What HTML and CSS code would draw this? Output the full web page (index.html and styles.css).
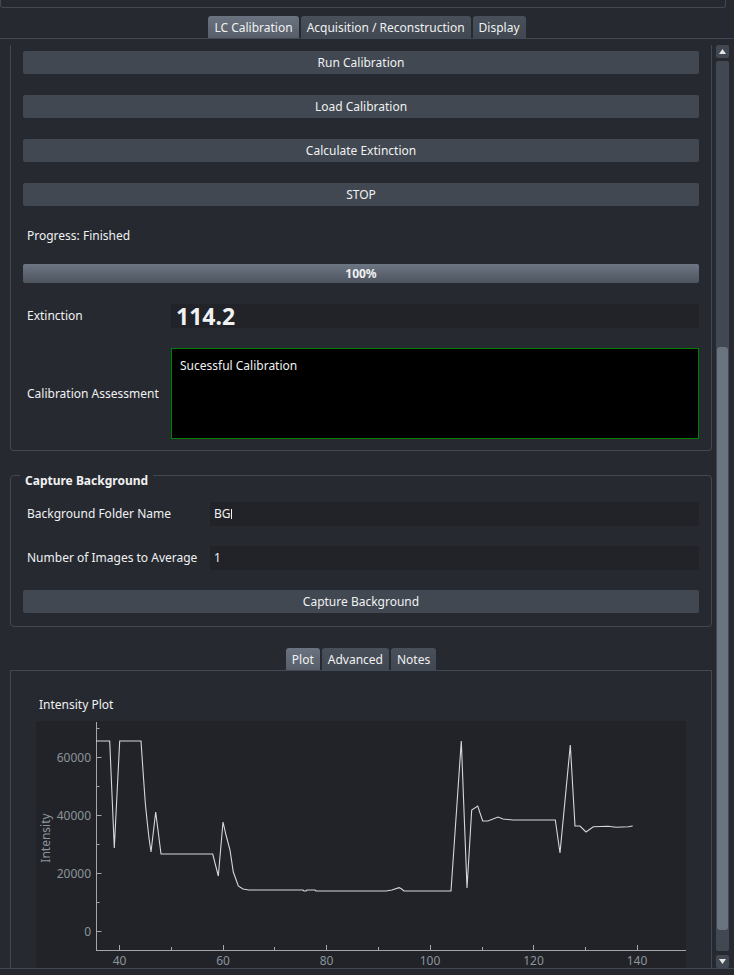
FILE: index.html
```html
<!DOCTYPE html>
<html>
<head>
<meta charset="utf-8">
<title>LC Calibration</title>
<link rel="stylesheet" href="styles.css">
</head>
<body>
<div class="app">
  <div class="top-panel"></div>
  <div class="tabbar main-tabs">
    <div class="tab selected">LC Calibration</div>
    <div class="tab">Acquisition / Reconstruction</div>
    <div class="tab">Display</div>
  </div>
  <div class="pane">
    <div class="scroll">
      <div class="viewport">
        <div class="group group-calib">
          <button class="btn">Run Calibration</button>
          <button class="btn">Load Calibration</button>
          <button class="btn">Calculate Extinction</button>
          <button class="btn">STOP</button>
          <div class="status">Progress: Finished</div>
          <div class="progress">100%</div>
          <div class="row row-ext">
            <div class="label label-calib">Extinction</div>
            <div class="field ext">114.2</div>
          </div>
          <div class="row row-assess">
            <div class="label label-calib">Calibration Assessment</div>
            <div class="assess">Sucessful Calibration</div>
          </div>
        </div>
        <fieldset class="group group-bg">
          <legend class="group-title">Capture Background</legend>
          <div class="row row-first">
            <div class="label label-bg">Background Folder Name</div>
            <div class="field input">BG<span class="caret"></span></div>
          </div>
          <div class="row row-next">
            <div class="label label-bg">Number of Images to Average</div>
            <div class="field input">1</div>
          </div>
          <button class="btn btn-capture">Capture Background</button>
        </fieldset>
        <div class="subtabs">
          <div class="tabbar sub-tabs">
            <div class="tab selected">Plot</div>
            <div class="tab">Advanced</div>
            <div class="tab">Notes</div>
          </div>
          <div class="subpane">
            <div class="plot-title">Intensity Plot</div>
            <div class="plot">
              <svg class="chart" width="650" height="260" viewBox="36 721 650 260" xmlns="http://www.w3.org/2000/svg">
                <g class="axis">
                  <line x1="96.5" y1="722" x2="96.5" y2="951"/>
                  <line x1="96" y1="950.5" x2="686" y2="950.5"/>
                  <line x1="96.5" y1="931.5" x2="101.5" y2="931.5"/>
                  <line x1="96.5" y1="873.5" x2="101.5" y2="873.5"/>
                  <line x1="96.5" y1="815.5" x2="101.5" y2="815.5"/>
                  <line x1="96.5" y1="757.5" x2="101.5" y2="757.5"/>
                  <line x1="96.5" y1="902.5" x2="99.5" y2="902.5"/>
                  <line x1="96.5" y1="844.5" x2="99.5" y2="844.5"/>
                  <line x1="96.5" y1="786.5" x2="99.5" y2="786.5"/>
                  <line x1="96.5" y1="728.5" x2="99.5" y2="728.5"/>
                  <line x1="119.5" y1="950" x2="119.5" y2="945"/>
                  <line x1="223.5" y1="950" x2="223.5" y2="945"/>
                  <line x1="326.5" y1="950" x2="326.5" y2="945"/>
                  <line x1="430.5" y1="950" x2="430.5" y2="945"/>
                  <line x1="533.5" y1="950" x2="533.5" y2="945"/>
                  <line x1="637.5" y1="950" x2="637.5" y2="945"/>
                  <line x1="171.5" y1="950" x2="171.5" y2="947"/>
                  <line x1="274.5" y1="950" x2="274.5" y2="947"/>
                  <line x1="378.5" y1="950" x2="378.5" y2="947"/>
                  <line x1="482.5" y1="950" x2="482.5" y2="947"/>
                  <line x1="585.5" y1="950" x2="585.5" y2="947"/>
                </g>
                <g class="ticklabels ylabels">
                  <text x="91" y="762">60000</text>
                  <text x="91" y="820">40000</text>
                  <text x="91" y="878">20000</text>
                  <text x="91" y="935.5">0</text>
                </g>
                <g class="ticklabels xlabels">
                  <text x="119.5" y="965">40</text>
                  <text x="223" y="965">60</text>
                  <text x="326.5" y="965">80</text>
                  <text x="430" y="965">100</text>
                  <text x="533.5" y="965">120</text>
                  <text x="637" y="965">140</text>
                </g>
                <text class="ytitle" transform="translate(49.5 838) rotate(-90)" x="0" y="0">Intensity</text>
                <polyline class="series" points="96,741 109.7,741 114.3,848 119.7,741 141,741 143.3,775 145.3,803 147,820 149,838 151,852 155.7,812 161,854 212.7,854 218.3,876 223,822 226,835 230,850 233.3,872 238.3,886 243,889 249,890 303,890 304,891 306,891 307,890 315,890 316,891 386,891 392,890 399,887.7 401,888.5 404,891 451,891 461.3,741 467,888 471.7,810 477.7,806 482.7,821 488,821 498,817 503,819 513,820 555.3,820 560,853 570.3,745 575,826 580,826 586,832 593.3,826.7 608,826.3 616,827.3 628.3,826.7 632.7,826"/>
              </svg>
            </div>
          </div>
        </div>
      </div>
      <div class="scrollbar">
        <div class="sb-btn">
          <svg width="7" height="5" viewBox="0 0 7 5"><polygon class="sb-arrow" points="0,5 3.5,0 7,5"/></svg>
        </div>
        <div class="sb-track"><div class="sb-handle"></div></div>
        <div class="sb-btn">
          <svg width="7" height="5" viewBox="0 0 7 5"><polygon class="sb-arrow" points="0,0 7,0 3.5,5"/></svg>
        </div>
      </div>
    </div>
    <div class="bottom-strip"></div>
  </div>
</div>
</body>
</html>
```
FILE: styles.css
```css
* { box-sizing: border-box; }

html, body {
  margin: 0;
  padding: 0;
  background: #262930;
}

body {
  width: 734px;
  height: 975px;
  overflow: hidden;
  font-family: "Noto Sans", "Open Sans", sans-serif;
  font-size: 12px;
  line-height: 16px;
  color: #f0f1f2;
}

.app {
  width: 734px;
  height: 975px;
  display: flex;
  flex-direction: column;
}

.top-panel {
  height: 8px;
  margin-right: 8px;
  border: 1px solid #414851;
  border-top: none;
  border-radius: 0 0 3px 3px;
  flex: none;
}

.tabbar {
  display: flex;
  justify-content: center;
  gap: 2px;
  height: 22px;
  flex: none;
}

.main-tabs { margin-top: 8px; }

.tab {
  height: 22px;
  line-height: 22px;
  padding: 1px 6px 0;
  border-radius: 3px 3px 0 0;
  background: linear-gradient(#49505a, #414851);
  color: #f0f1f2;
  white-space: nowrap;
}

.tab.selected {
  background: linear-gradient(#6a7380, #575e69);
}

.pane {
  flex: 1;
  border-top: 1px solid #414851;
  padding-top: 6px;
  display: flex;
  flex-direction: column;
  min-height: 0;
}

.scroll {
  display: flex;
  height: 923px;
  flex: none;
}

.viewport {
  flex: 1;
  overflow: hidden;
  min-width: 0;
}

.bottom-strip {
  flex: 1;
  border-top: 1px solid #414851;
}

/* group boxes */
.group {
  width: 702px;
  margin-left: 10px;
  border: 1px solid #414851;
}

.group-calib {
  border-top: none;
  border-radius: 0 0 4px 4px;
  padding: 6px 12px 11px;
}

.btn {
  display: block;
  width: 100%;
  height: 23px;
  margin: 0 0 21px;
  padding: 0;
  border: none;
  border-radius: 2px;
  background: #414851;
  color: #f0f1f2;
  font: inherit;
  line-height: 23px;
  text-align: center;
}

.group-calib .btn:nth-of-type(4) { margin-bottom: 0; }

.status {
  margin-top: 21px;
  line-height: 18px;
  padding-left: 4px;
}

.progress {
  margin-top: 19px;
  height: 19px;
  line-height: 19px;
  border-radius: 2px;
  background: linear-gradient(#6d7683, #4d545e);
  text-align: center;
  font-weight: bold;
}

.row {
  display: flex;
  align-items: center;
}

.label {
  flex: none;
  padding-left: 4px;
}

.label-calib { width: 148px; }
.label-bg { width: 187px; }

.field {
  flex: 1;
  height: 24px;
  background: #212328;
}

.row-ext { margin-top: 21px; }

.ext {
  font-size: 23px;
  font-weight: bold;
  line-height: 24px;
  padding-left: 5px;
}

.row-assess { margin-top: 20px; }

.assess {
  flex: 1;
  height: 91px;
  background: #000;
  border: 1px solid #008000;
  padding: 9px 8px;
}

/* capture background group */
.group-bg {
  margin: 10px 0 0 10px;
  padding: 0 12px 13px;
  border-radius: 4px;
  min-width: 0;
}

.group-title {
  padding: 12px 5px 0;
  margin-left: -3px;
  font-weight: bold;
  line-height: 16px;
}

.row-first { margin-top: 13px; }
.row-next { margin-top: 20px; }

.input {
  line-height: 24px;
  padding-left: 4px;
}

.caret {
  display: inline-block;
  width: 1px;
  height: 10px;
  background: #f0f1f2;
  vertical-align: -1px;
}

.btn-capture {
  height: 23px;
  line-height: 23px;
  margin: 20px 0 0;
}

/* bottom tabs */
.subtabs {
  width: 702px;
  margin: 21px 0 0 10px;
}

.subpane {
  border: 1px solid #414851;
  border-bottom: none;
  padding: 26px 25px 0;
}

.plot-title {
  padding-left: 3px;
  line-height: 16px;
}

.plot {
  margin-top: 8px;
  height: 260px;
  background: #212328;
}

.chart { display: block; }

.axis line {
  stroke: #a3a7ad;
  stroke-width: 1;
}

.ticklabels text, .ytitle {
  font-family: "Noto Sans", sans-serif;
  font-size: 12px;
  fill: #8c949c;
}

.ylabels text { text-anchor: end; }
.xlabels text { text-anchor: middle; }
.ytitle { text-anchor: middle; }

.series {
  fill: none;
  stroke: #d6d7d9;
  stroke-width: 1.1;
}

/* scrollbar */
.scrollbar {
  width: 13px;
  margin: 0 5px 0 3px;
  display: flex;
  flex-direction: column;
  flex: none;
}

.sb-btn {
  height: 13px;
  background: #414851;
  border-radius: 2px;
  display: flex;
  align-items: center;
  justify-content: center;
  flex: none;
}

.sb-btn svg { display: block; }

.sb-arrow { fill: #e4e5e7; }

.sb-track {
  margin: 3px 0 4px;
  height: 890px;
  background: #414851;
  border-radius: 2px;
  padding: 0 1px;
  flex: none;
}

.sb-handle {
  margin-top: 286px;
  height: 583px;
  background: #6a7380;
  border-radius: 3px;
}
```
